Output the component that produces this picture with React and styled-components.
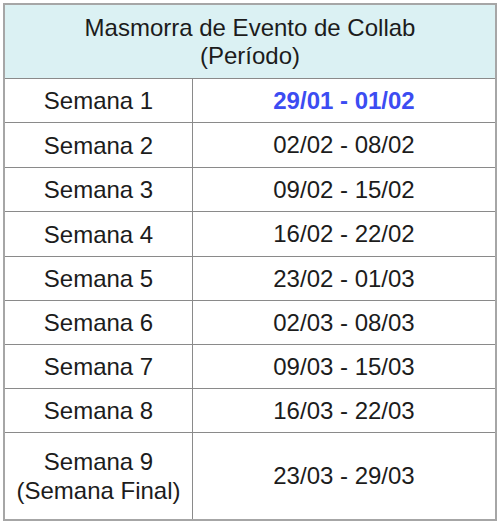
import React from 'react'
import styled, { createGlobalStyle } from 'styled-components'

const GlobalStyle = createGlobalStyle`
  body {
    margin: 0;
    background: #fff;
    font-family: 'Liberation Sans', Arial, sans-serif;
  }
`

const weeks = [
  { label: 'Semana 1', range: '29/01 - 01/02', current: true, h: 44 },
  { label: 'Semana 2', range: '02/02 - 08/02', h: 45 },
  { label: 'Semana 3', range: '09/02 - 15/02', h: 44 },
  { label: 'Semana 4', range: '16/02 - 22/02', h: 45 },
  { label: 'Semana 5', range: '23/02 - 01/03', h: 44 },
  { label: 'Semana 6', range: '02/03 - 08/03', h: 44 },
  { label: 'Semana 7', range: '09/03 - 15/03', h: 44 },
  { label: 'Semana 8', range: '16/03 - 22/03', h: 44 },
  { label: ['Semana 9', '(Semana Final)'], range: '23/03 - 29/03', h: 86, last: true }
]

export default () => (
  <>
    <GlobalStyle />
    <Table>
      <Header>
        Masmorra de Evento de Collab<br />(Período)
      </Header>
      {weeks.map((w, i) => (
        <Row key={i} $h={w.h} $last={w.last}>
          <Week>
            {Array.isArray(w.label) ? <>{w.label[0]}<br />{w.label[1]}</> : w.label}
          </Week>
          <Range $current={w.current}>{w.range}</Range>
        </Row>
      ))}
    </Table>
  </>
)

const Table = styled.div`
  margin: 3px;
  width: 494px;
  box-sizing: border-box;
  border: 2px solid #a6a6a6;
  display: flex;
  flex-direction: column;
  color: #1c1c1c;
  font-size: 24px;
`

const Header = styled.div`
  height: 74px;
  box-sizing: border-box;
  background: #dbf1f3;
  border-bottom: 1px solid #8a8a8a;
  display: flex;
  align-items: center;
  justify-content: center;
  text-align: center;
  line-height: 28px;
  padding-top: 1px;
`

const Row = styled.div`
  height: ${p => p.$h}px;
  box-sizing: border-box;
  display: grid;
  grid-template-columns: 188px 1fr;
  border-bottom: ${p => p.$last ? 'none' : '1px solid #8a8a8a'};
`

const Cell = styled.div`
  display: flex;
  align-items: center;
  justify-content: center;
  text-align: center;
`

const Week = styled(Cell)`
  border-right: 1px solid #8a8a8a;
  line-height: 29px;
`

const Range = styled(Cell)`
  color: ${p => p.$current ? '#3c4cf2' : 'inherit'};
  font-weight: ${p => p.$current ? 700 : 400};
`
